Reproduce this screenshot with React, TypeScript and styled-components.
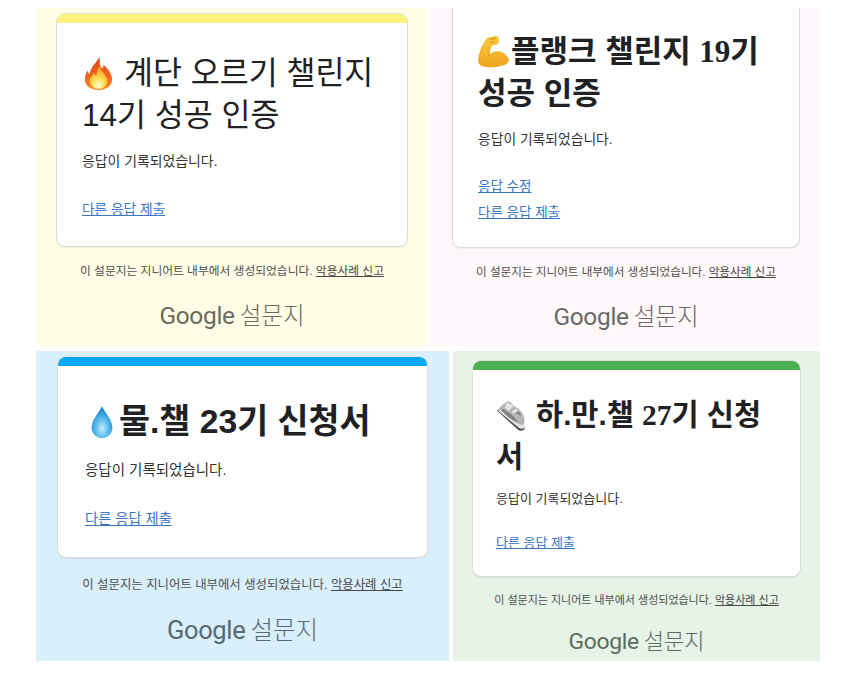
import React from 'react';
import styled, { createGlobalStyle } from 'styled-components';

const GlobalStyle = createGlobalStyle`
  html, body {
    margin: 0;
    padding: 0;
    background: #ffffff;
  }
  body {
    font-family: "Liberation Sans", "Noto Sans CJK KR", sans-serif;
  }
`;

const Sheet = styled.div`
  width: 856px;
  height: 677px;
  padding-top: 8px;
  box-sizing: border-box;
  display: flex;
  flex-direction: column;
  gap: 5px;
  overflow: hidden;
`;

const Row = styled.div<{ $left: number; $columns: string; $height: number; $gap: number }>`
  display: grid;
  grid-template-columns: ${(p) => p.$columns};
  gap: ${(p) => p.$gap}px;
  height: ${(p) => p.$height}px;
  padding-left: ${(p) => p.$left}px;
`;

const Panel = styled.section<{ $bg: string; $pad: string }>`
  background: ${(p) => p.$bg};
  padding: ${(p) => p.$pad};
  overflow: hidden;
  display: flex;
  flex-direction: column;
`;

const Card = styled.div<{ $bar?: string; $height: number; $padX: number; $open?: boolean }>`
  height: ${(p) => p.$height}px;
  box-sizing: border-box;
  background: #ffffff;
  border: 1px solid #dcdcd8;
  border-top: ${(p) => (p.$open ? 'none' : '1px solid #dcdcd8')};
  border-radius: ${(p) => (p.$open ? '0 0 9px 9px' : '9px')};
  box-shadow: 0 1px 1px rgba(0, 0, 0, 0.06);
  padding: 0 ${(p) => p.$padX}px;
  position: relative;
  overflow: hidden;
  ${(p) =>
    p.$bar
      ? `&::before {
    content: '';
    display: block;
    height: 10px;
    margin: -1px -${p.$padX + 1}px 0;
    background: ${p.$bar};
  }`
      : ''}
`;

const Title = styled.h1<{ $size: number; $weight: number; $top: number; $line: number }>`
  margin: ${(p) => p.$top}px 0 0;
  font-family: "Liberation Sans", "Noto Sans CJK KR", sans-serif;
  font-size: ${(p) => p.$size}px;
  font-weight: ${(p) => p.$weight};
  line-height: ${(p) => p.$line}px;
  color: #202124;
  word-break: break-all;
`;

const SerifDigits = styled.span`
  font-family: "Liberation Serif", serif;
  font-weight: 700;
`;

const EmojiIcon = styled.svg<{ $size: number; $right: number }>`
  width: ${(p) => p.$size}px;
  height: ${(p) => p.$size}px;
  margin-right: ${(p) => p.$right}px;
  vertical-align: -6px;
`;

const Message = styled.p<{ $size: number; $top: number }>`
  margin: ${(p) => p.$top}px 0 0;
  font-size: ${(p) => p.$size}px;
  line-height: 20px;
  color: #333333;
`;

const Links = styled.div<{ $top: number; $gap: number }>`
  margin-top: ${(p) => p.$top}px;
  display: flex;
  flex-direction: column;
  align-items: flex-start;
  gap: ${(p) => p.$gap}px;
`;

const ResponseLink = styled.a<{ $size: number }>`
  font-size: ${(p) => p.$size}px;
  line-height: 20px;
  color: #3a76c4;
  text-decoration: underline;
`;

const Notice = styled.p<{ $size: number; $top: number }>`
  margin: ${(p) => p.$top}px 0 0;
  font-size: ${(p) => p.$size}px;
  line-height: 16px;
  color: #4f4f4d;
  text-align: center;
  white-space: nowrap;
`;

const ReportLink = styled.a`
  color: #484846;
  text-decoration: underline;
`;

const Brand = styled.div<{ $size: number; $top: number; $color: string }>`
  margin-top: ${(p) => p.$top}px;
  display: flex;
  justify-content: center;
  align-items: baseline;
  gap: 5px;
  color: ${(p) => p.$color};
  font-size: ${(p) => p.$size}px;
  line-height: 30px;
`;

const BrandWord = styled.span`
  font-family: Roboto, sans-serif;
  font-weight: 400;
  font-size: 1.04em;
  letter-spacing: -0.3px;
`;

const BrandProduct = styled.span`
  font-family: "Noto Sans CJK KR", sans-serif;
  font-weight: 300;
`;

const Fire = ({ size, right }: { size: number; right: number }) => (
  <EmojiIcon $size={size} $right={right} viewBox="0 0 30 34">
    <defs>
      <linearGradient id="fireOuter" x1="0" y1="0" x2="0" y2="1">
        <stop offset="0%" stopColor="#e8421c" />
        <stop offset="55%" stopColor="#f2611d" />
        <stop offset="100%" stopColor="#f98a1f" />
      </linearGradient>
      <radialGradient id="fireInner" cx="50%" cy="85%" r="75%">
        <stop offset="0%" stopColor="#fffbd8" />
        <stop offset="40%" stopColor="#ffe45a" />
        <stop offset="100%" stopColor="#fb9a22" />
      </radialGradient>
    </defs>
    <path
      fill="url(#fireOuter)"
      d="M16 0c1 5-1 8 3 12 1-1 1-3 1-4 5 4 9 10 9 15 0 7-6 11-14 11S1 30 1 23c0-4 1-6 3-9 0 2 1 3 2 4 0-7 6-11 10-18z"
    />
    <path
      fill="url(#fireInner)"
      d="M16 9c1 5 6 8 8 14 1 6-4 10-9 10S5 29 6 23c1-3 3-4 4-7 1 2 2 3 3 3 0-4 1-7 3-10z"
    />
  </EmojiIcon>
);

const Biceps = ({ size, right }: { size: number; right: number }) => (
  <EmojiIcon $size={size} $right={right} viewBox="0 0 36 36">
    <defs>
      <linearGradient id="armGrad" x1="0" y1="0" x2="0" y2="1">
        <stop offset="0%" stopColor="#fbc93f" />
        <stop offset="100%" stopColor="#f0a41f" />
      </linearGradient>
    </defs>
    <path
      fill="url(#armGrad)"
      d="M10 3l9-2c3 0 4 2 4 5s-2 5-5 5l-2 0c-2 2-3 6-3 10 3-3 7-4 11-3 4 1 8 4 10 9-1 3-3 5-6 6-6 2-16 3-23 1-3-1-5-3-5-6 1-9 4-17 10-25z"
    />
    <path fill="none" stroke="#b97a0c" strokeWidth="1" d="M13 5c2-1 4-1 6-1M14 8c1 0 3 0 4-1M13 21c-1 1-2 2-2 3" />
  </EmojiIcon>
);

const Droplet = ({ size, right }: { size: number; right: number }) => (
  <EmojiIcon $size={size} $right={right} viewBox="0 0 24 36">
    <defs>
      <radialGradient id="dropGrad" cx="50%" cy="70%" r="60%">
        <stop offset="0%" stopColor="#c4ecfb" />
        <stop offset="50%" stopColor="#5cbcee" />
        <stop offset="100%" stopColor="#1489d6" />
      </radialGradient>
    </defs>
    <path fill="url(#dropGrad)" d="M12 1c2 6 11 14 11 23 0 6-5 11-11 11S1 30 1 24C1 15 10 7 12 1z" />
  </EmojiIcon>
);

const Sneaker = ({ size, right }: { size: number; right: number }) => (
  <EmojiIcon $size={size} $right={right} viewBox="0 0 32 32">
    <path fill="#4f5154" d="M1 11l22 20c2 1 5 1 7-1l-1-3L3 9z" />
    <path fill="#e4e4e2" d="M2 11l22 18c2 1 4 1 6 0l-1-3L4 8z" />
    <path fill="#b4b5b4" d="M3 9c2-3 5-5 8-7 2-1 4 0 5 1l2 3c3 2 6 3 8 6 3 3 4 8 3 13-1 1-3 1-5 0C17 21 10 16 3 9z" />
    <path fill="#7f8182" d="M7 9l9 6 7 8-4-1-7-5-6-6zM21 10c2 1 4 3 5 6l-5-2z" />
    <path fill="#e6e6e4" d="M11 3l5 1 2 3-5 4-4-3zM16 12l5-3 2 2-5 3z" />
  </EmojiIcon>
);

const Footer = ({ size, top, brandTop, brandSize, brandColor }: {
  size: number;
  top: number;
  brandTop: number;
  brandSize: number;
  brandColor: string;
}) => (
  <>
    <Notice $size={size} $top={top}>
      이 설문지는 지니어트 내부에서 생성되었습니다. <ReportLink>악용사례 신고</ReportLink>
    </Notice>
    <Brand $size={brandSize} $top={brandTop} $color={brandColor}>
      <BrandWord>Google</BrandWord>
      <BrandProduct>설문지</BrandProduct>
    </Brand>
  </>
);

export default function App() {
  return (
    <>
      <GlobalStyle />
      <Sheet>
        <Row $left={37} $columns="391px 390px" $gap={2} $height={338}>
          <Panel $bg="#fffde6" $pad="5px 20px 0 19px">
            <Card $bar="#fdf27c" $height={234} $padX={25}>
              <Title $size={31.5} $weight={400} $top={29} $line={42}>
                <Fire size={33} right={9} />계단 오르기 챌린지 14기 성공 인증
              </Title>
              <Message $size={13.9} $top={15}>응답이 기록되었습니다.</Message>
              <Links $top={29} $gap={6}>
                <ResponseLink $size={13.7}>다른 응답 제출</ResponseLink>
              </Links>
            </Card>
            <Footer size={11.75} top={16} brandTop={20} brandSize={23.5} brandColor="#6a6a5e" />
          </Panel>
          <Panel $bg="#fff7f8" $pad="0 20px 0 22px">
            <Card $open $height={240} $padX={25}>
              <Title $size={31} $weight={700} $top={23} $line={42}>
                <Biceps size={33} right={0} />플랭크 챌린지 <SerifDigits>19</SerifDigits>기 성공 인증
              </Title>
              <Message $size={13.8} $top={15}>응답이 기록되었습니다.</Message>
              <Links $top={27} $gap={6}>
                <ResponseLink $size={13.5}>응답 수정</ResponseLink>
                <ResponseLink $size={13.5}>다른 응답 제출</ResponseLink>
              </Links>
            </Card>
            <Footer size={11.6} top={16} brandTop={20} brandSize={23.5} brandColor="#68686a" />
          </Panel>
        </Row>
        <Row $left={36} $columns="413px 367px" $gap={4} $height={310}>
          <Panel $bg="#d9effc" $pad="5px 21px 0 21px">
            <Card $bar="#03a9f4" $height={202} $padX={27}>
              <Title $size={33.7} $weight={700} $top={33} $line={44}>
                <Droplet size={34} right={0} />물.챌 23기 신청서
              </Title>
              <Message $size={14.5} $top={17}>응답이 기록되었습니다.</Message>
              <Links $top={29} $gap={6}>
                <ResponseLink $size={14.3}>다른 응답 제출</ResponseLink>
              </Links>
            </Card>
            <Footer size={12.4} top={19} brandTop={21} brandSize={24.5} brandColor="#566a76" />
          </Panel>
          <Panel $bg="#e6f3e7" $pad="9px 19px 0 19px">
            <Card $bar="#4caf50" $height={217} $padX={23}>
              <Title $size={29.5} $weight={700} $top={24} $line={41}>
                <Sneaker size={31} right={9} />하.만.챌 <SerifDigits>27</SerifDigits>기 신청서
              </Title>
              <Message $size={13} $top={12}>응답이 기록되었습니다.</Message>
              <Links $top={24} $gap={6}>
                <ResponseLink $size={13}>다른 응답 제출</ResponseLink>
              </Links>
            </Card>
            <Footer size={11} top={15} brandTop={16} brandSize={22} brandColor="#5e6b60" />
          </Panel>
        </Row>
      </Sheet>
    </>
  );
}
